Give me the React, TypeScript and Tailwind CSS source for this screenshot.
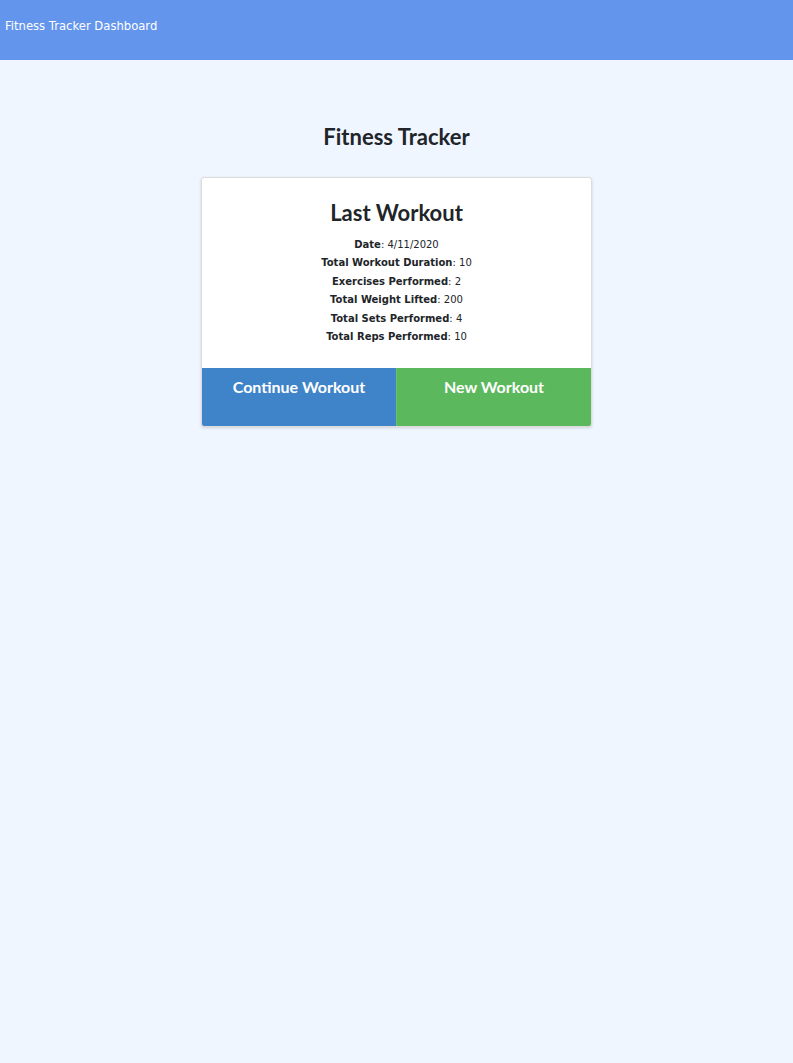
export default function App() {
  const stats = [
    ["Date", "4/11/2020"],
    ["Total Workout Duration", "10"],
    ["Exercises Performed", "2"],
    ["Total Weight Lifted", "200"],
    ["Total Sets Performed", "4"],
    ["Total Reps Performed", "10"],
  ]

  return (
    <div className="min-h-[1063px] bg-[#f0f6ff]">
      <header className="h-[60px] bg-[#6495ed] px-[5px] pt-[12px]">
        <span className="text-[11.6px] text-white" style={{ fontFamily: "'DejaVu Sans', Verdana, sans-serif" }}>
          Fitness Tracker Dashboard
        </span>
      </header>

      <main className="flex flex-col items-center pt-[63px]" style={{ fontFamily: "Lato, sans-serif" }}>
        <h1 className="text-[22px] font-bold text-[#212529] leading-[28px]">Fitness Tracker</h1>

        <div className="mt-[26px] w-[391px] overflow-hidden rounded-[3px] border border-[#dcdcdc] bg-white shadow-[0_1px_3px_rgba(0,0,0,0.15)]">
          <div className="px-4 pt-[20px] pb-[22px] text-center">
            <h2 className="text-[22px] font-bold leading-[30px] text-[#212529]">Last Workout</h2>
            <div
              className="mt-[8px] text-[10px] leading-[18.4px] text-[#212529]"
              style={{ fontFamily: "'DejaVu Sans', Verdana, sans-serif" }}
            >
              {stats.map(([label, value]) => (
                <div key={label}>
                  <span className="font-bold">{label}</span>: {value}
                </div>
              ))}
            </div>
          </div>
          <div className="flex h-[58px]">
            <button className="flex-1 bg-[#3f84c8] pt-[7px] text-[16px] font-bold text-white">
              <div className="h-full">Continue Workout</div>
            </button>
            <button className="flex-1 border-l border-[#6fbf6f] bg-[#5cb85c] pt-[7px] text-[16px] font-bold text-white">
              <div className="h-full">New Workout</div>
            </button>
          </div>
        </div>
      </main>
    </div>
  )
}
